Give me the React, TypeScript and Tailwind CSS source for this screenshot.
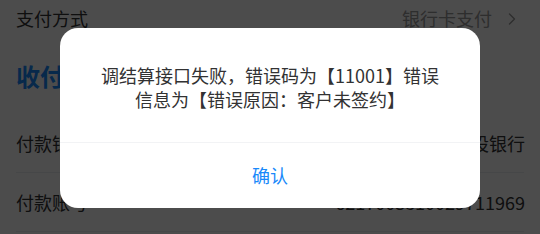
import { ChevronRight } from "lucide-react"

const font = { fontFamily: '"Noto Sans CJK SC", "Noto Sans", sans-serif' }

function Row({ label, value }: { label: string; value: string }) {
  return (
    <div className="mx-4 flex h-[59px] items-center justify-between border-b border-[#ebedf0] text-[18px] text-[#323233]">
      <span>{label}</span>
      <span className="-mr-[1px]">{value}</span>
    </div>
  )
}

export default function App() {
  return (
    <div className="relative h-[234px] w-[540px] overflow-hidden bg-white" style={font}>
      <div className="flex h-[37px] items-center justify-between pl-4 pr-[18px] text-[18px]">
        <span className="text-[#323233]">支付方式</span>
        <span className="flex items-center gap-[10px] text-[#999]">
          银行卡支付
          <ChevronRight className="h-[20px] w-[20px]" strokeWidth={1.6} />
        </span>
      </div>
      <div className="flex h-[77px] items-center px-4 text-[24px] font-bold text-[#1989fa]">收付款信息</div>
      <Row label="付款银行" value="中国建设银行" />
      <Row label="付款账号" value="6217003810029711969" />

      <div className="absolute inset-0 bg-black/70" />

      <div className="absolute left-[60px] top-[28px] w-[420px] overflow-hidden rounded-[18px] bg-white">
        <div className="pb-[31px] pt-[35px] text-center text-[18px] leading-[24px] text-[#323233]">
          <p>调结算接口失败，错误码为【11001】错误</p>
          <p>信息为【错误原因：客户未签约】</p>
        </div>
        <div className="h-px bg-[#f2f3f5]" />
        <button className="flex h-[65px] w-full items-center justify-center text-[18px] text-[#1989fa]">确认</button>
      </div>
    </div>
  )
}
